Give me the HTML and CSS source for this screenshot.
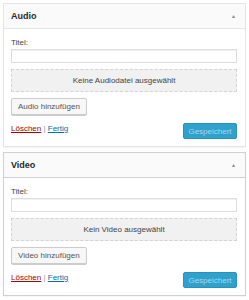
FILE: index.html
```html
<!DOCTYPE html>
<html lang="de">
<head>
    <meta charset="UTF-8">
    <title>Widgets</title>
    <link rel="stylesheet" href="styles.css">
</head>
<body>
    <div class="widget">
        <div class="widget-top">
            <h3>Audio</h3>
            <span class="toggle">&#9650;</span>
        </div>
        <div class="widget-inside">
            <label class="field-label">Titel:</label>
            <input type="text" class="title-input">
            <div class="media-placeholder">Keine Audiodatei ausgewählt</div>
            <button class="add-btn">Audio hinzufügen</button>
            <div class="widget-actions">
                <div class="links">
                    <a href="#" class="delete">Löschen</a> | <a href="#" class="done">Fertig</a>
                </div>
                <button class="save-btn">Gespeichert</button>
            </div>
        </div>
    </div>

    <div class="widget active">
        <div class="widget-top">
            <h3>Video</h3>
            <span class="toggle">&#9650;</span>
        </div>
        <div class="widget-inside">
            <label class="field-label">Titel:</label>
            <input type="text" class="title-input">
            <div class="media-placeholder">Kein Video ausgewählt</div>
            <button class="add-btn">Video hinzufügen</button>
            <div class="widget-actions">
                <div class="links">
                    <a href="#" class="delete">Löschen</a> | <a href="#" class="done">Fertig</a>
                </div>
                <button class="save-btn">Gespeichert</button>
            </div>
        </div>
    </div>
</body>
</html>
```

FILE: styles.css
```css
body {
    font-family: "Liberation Sans", Arial, sans-serif;
    font-size: 8px;
    color: #444;
    margin: 0;
    padding: 3px 3px 0 3px;
    background-color: white;
}
.widget {
    width: 241px;
    border: 1px solid #e5e5e5;
    background-color: white;
    margin-bottom: 5px;
    box-shadow: 0 1px 1px rgba(0, 0, 0, 0.04);
}
.widget.active {
    border-color: #d0d0d0;
}
.widget-top {
    display: flex;
    justify-content: space-between;
    align-items: center;
    height: 24px;
    padding: 0 9px 0 7px;
    background-color: #fafafa;
    border-bottom: 1px solid #e5e5e5;
}
.widget.active .widget-top {
    border-bottom-color: #d0d0d0;
}
.widget-top h3 {
    margin: 0;
    font-size: 9px;
    font-weight: bold;
    color: #23282d;
}
.toggle {
    font-size: 5px;
    color: #888;
}
.widget-inside {
    padding: 9px 8px 7px 7px;
}
.field-label {
    display: block;
    color: #444;
    margin-bottom: 2px;
}
.title-input {
    display: block;
    box-sizing: border-box;
    width: 100%;
    height: 14px;
    margin: 0 0 6px 0;
    border: 1px solid #ddd;
    box-shadow: inset 0 1px 1px rgba(0, 0, 0, 0.06);
}
.media-placeholder {
    box-sizing: border-box;
    height: 23px;
    border: 1px dashed #d4d4d4;
    background-color: #f1f1f1;
    text-align: center;
    line-height: 21px;
    color: #444;
    margin-bottom: 6px;
}
.add-btn {
    font-family: inherit;
    font-size: 8px;
    color: #555;
    background-color: #f7f7f7;
    border: 1px solid #ccc;
    border-radius: 2px;
    box-shadow: 0 1px 0 #ccc;
    height: 17px;
    padding: 0 6px;
}
.widget-actions {
    display: flex;
    justify-content: space-between;
    align-items: flex-start;
    margin-top: 7px;
}
.links {
    color: #999;
    padding-top: 2px;
}
.links a {
    text-decoration: underline;
}
.delete {
    color: #a00;
}
.done {
    color: #0073aa;
}
.save-btn {
    font-family: inherit;
    font-size: 8px;
    color: #a8d8ec;
    background-color: #2ea2cc;
    border: 1px solid #2a92b8;
    border-radius: 2px;
    height: 16px;
    width: 54px;
    padding: 0;
    margin-top: 1px;
}
```
